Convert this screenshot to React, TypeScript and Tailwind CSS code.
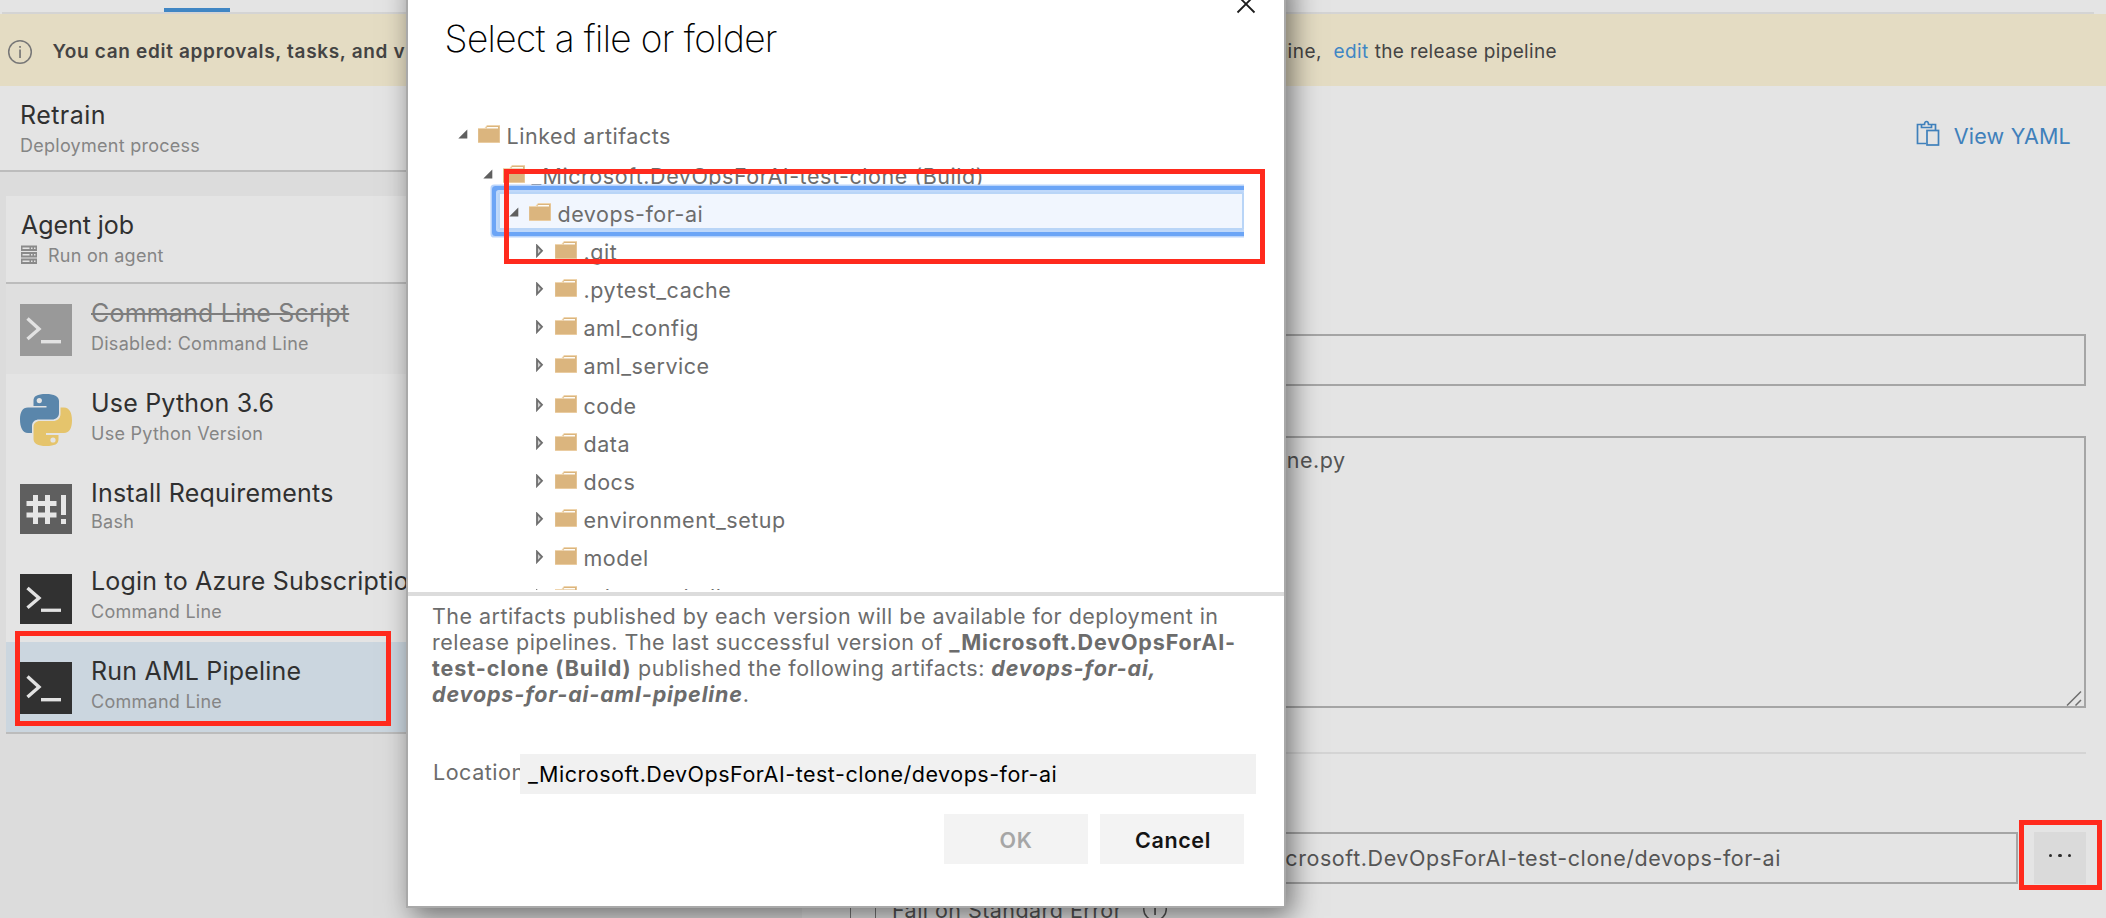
import React from "react";

type Expand = "open" | "closed";

function FolderIcon() {
  return (
    <svg viewBox="0 0 22 18" className="mt-[5px] h-[18px] w-[22px] shrink-0">
      <path d="M0 3H6.5L9 0H22V18H0Z" fill="#efd5ae" />
      <path d="M0.3 4H8L9 1H21.5V17.2H0.3Z" fill="#dbb57e" />
      <path d="M9.3 1.9H20V3.6H8.2Z" fill="#fffdf8" />
    </svg>
  );
}

function Arrow({ state }: { state: Expand }) {
  return state === "open" ? (
    <svg viewBox="0 0 10 10" className="mt-[9px] h-[10px] w-[10px] shrink-0">
      <path d="M9.3 0.6V9.6H0.3Z" fill="#5f5f5f" />
    </svg>
  ) : (
    <svg viewBox="0 0 8 14" className="mt-[8px] ml-[0.5px] h-[14px] w-[8px] shrink-0">
      <path d="M1 1.6V12L6 6.8Z" fill="#d0d0d0" stroke="#6e6e6e" strokeWidth="1.8" />
    </svg>
  );
}

function CmdIcon({ className }: { className: string }) {
  return (
    <svg viewBox="0 0 52 52" preserveAspectRatio="none" className={"w-[52px] " + className}>
      <rect width="52" height="52" fill="currentColor" />
      <path d="M7.5 14.5L19 25L7.5 35" fill="none" stroke="#e2e2e2" strokeWidth="3.4" />
      <rect x="21" y="36" width="20" height="3.4" fill="#e2e2e2" />
    </svg>
  );
}

function BashIcon() {
  return (
    <svg viewBox="0 0 52 50" className="mt-[20px] h-[50px] w-[52px]">
      <rect width="52" height="50" fill="#5f5f5f" />
      <g fill="#e6e6e6">
        <rect x="13" y="11" width="5" height="29" />
        <rect x="25" y="11" width="5" height="29" />
        <rect x="6.5" y="17" width="30" height="5" />
        <rect x="6.5" y="28.5" width="30" height="5" />
        <rect x="41" y="11" width="5" height="20" />
        <rect x="41" y="35" width="5" height="5" />
      </g>
    </svg>
  );
}

function PythonIcon() {
  return (
    <svg viewBox="0 0 52 52" className="mt-[20px] h-[52px] w-[52px]">
      <path d="M26 0C17 0 13.5 2 13.5 7V12H26.500V13.500H8C2.500 13.500 0 18 0 25.500S2.500 39 8 39H12V32C12 27.500 15.500 25.500 19 25.500H32C36 25.500 39 23 39 19V7C39 2.500 34 0 26 0Z" fill="#5a86ab" />
      <path d="M26 52C35 52 38.500 50 38.500 45V41H26V39H44C49.500 39 52 34 52 26.500S49.500 13.500 44 13.500H40.500V20C40.500 24.500 37 27 33 27H20C16 27 13.500 29.500 13.500 33V45C13.500 49.500 18 52 26 52Z" fill="#e5c46c" />
      <circle cx="19.300" cy="6.600" r="2.600" fill="#e4e4e4" />
      <circle cx="33" cy="46" r="2.600" fill="#e4e4e4" />
    </svg>
  );
}

function ServerIcon() {
  return (
    <svg viewBox="0 0 16 20" className="mt-[2px] h-[20px] w-[16px]">
      {[0.500, 7, 13.500].map((y) => (
        <g key={y}>
          <rect x="0" y={y} width="16" height="5.500" fill="#8a8a8a" />
          <rect x="1.500" y={y + 2} width="7" height="1.500" fill="#e4e4e4" />
          <rect x="10" y={y + 2} width="1.500" height="1.500" fill="#e4e4e4" />
          <rect x="13" y={y + 2} width="1.500" height="1.500" fill="#e4e4e4" />
        </g>
      ))}
    </svg>
  );
}

function InfoIcon({ className }: { className: string }) {
  return (
    <svg viewBox="0 0 26 26" className={"h-[26px] w-[26px] shrink-0 " + className}>
      <circle cx="13" cy="13" r="11.300" fill="none" stroke="currentColor" strokeWidth="1.500" />
      <rect x="12.200" y="10.500" width="1.700" height="8.500" fill="currentColor" />
      <rect x="12.200" y="7" width="1.700" height="1.800" fill="currentColor" />
    </svg>
  );
}

const subText = "mt-[3px] text-[18px] leading-[26px] tracking-[0.26px] text-[#858585]";
const titleText = "text-[25px] leading-[30px] tracking-[0.2px]";

function Task({ icon, title, sub, row = "h-[90px]", titleClass = "text-[#303030]", subClass = "" }: {
  icon: React.ReactNode; title: string; sub: string; row?: string; titleClass?: string; subClass?: string;
}) {
  return (
    <div className={"flex pl-[14px] " + row}>
      {icon}
      <div className="ml-[19px] pt-[14px] whitespace-nowrap">
        <div className={titleText + " " + titleClass}>{title}</div>
        <div className={subText + " " + subClass}>{sub}</div>
      </div>
    </div>
  );
}

function Row({ indent, state, label, className = "h-[38px]" }: { indent: string; state: Expand; label: string; className?: string }) {
  return (
    <div className={"flex shrink-0 items-start pt-[6px] " + indent + " " + className}>
      <div className="flex w-[19.500px] shrink-0">
        <Arrow state={state} />
      </div>
      <FolderIcon />
      <span className="ml-[7px] leading-[32px] tracking-[0.53px] whitespace-nowrap">{label}</span>
    </div>
  );
}

const children = [".git", ".pytest_cache", "aml_config", "aml_service", "code", "data", "docs", "environment_setup", "model", "release_shell"];

const rowHeights: Record<string, string> = { aml_service: "h-[40px]", model: "h-[39px]" };

function Dialog() {
  return (
    <div className="absolute top-[-30px] left-[406px] flex h-[938px] w-[880px] flex-col border-2 border-[#a9a9a9] bg-white pt-[28px] text-[21.5px] text-[#6c6c6c] shadow-[6px_8px_26px_rgba(0,0,0,0.5)]">
      <div className="flex h-[114px] shrink-0 justify-between pl-[36.500px]">
        <h1 className="pt-[19px] text-[37px] leading-[40px] font-[250] tracking-[-0.62px] text-black">Select a file or folder</h1>
        <svg viewBox="0 0 20 20" className="mt-[-6px] mr-[28px] h-[20px] w-[20px]">
          <path d="M1.500 1.500L18.500 18.500M18.500 1.500L1.500 18.500" stroke="#1c1c1c" strokeWidth="1.800" />
        </svg>
      </div>
      <div className="mr-[40px] flex h-[476px] shrink-0 flex-col overflow-hidden">
        <Row indent="pl-[50px]" state="open" label="Linked artifacts" className="h-[40px] tracking-[0.6px]" />
        <Row indent="pl-[75px]" state="open" label="_Microsoft.DevOpsForAI-test-clone (Build)" />
        <div className="relative ml-[90px] shrink-0 rounded-[1px] bg-[#f1f6fe] shadow-[inset_0_0_0_2px_#b9d5f7,0_0_0_2px_#bfd8fa,0_0_0_6px_#6ca5f6,0_0_0_7.500px_#b9d4fb]">
          <Row indent="pl-[11px]" state="open" label="devops-for-ai" />
        </div>
        {children.map((c) => (
          <Row key={c} indent="pl-[127px]" state="closed" label={c} className={rowHeights[c] ?? "h-[38px]"} />
        ))}
      </div>
      <div className="mt-[2px] h-[4px] shrink-0 bg-[#dcdcdc]" />
      <p className="mt-[7px] pl-[24px] leading-[26px] tracking-[0.475px] whitespace-nowrap">
        The artifacts published by each version will be available for deployment in<br />
        release pipelines. The last successful version of <b className="font-bold tracking-[0.85px]">_Microsoft.DevOpsForAI-</b><br />
        <b className="font-bold tracking-[0.93px]">test-clone (Build)</b> published the following artifacts: <b className="font-bold tracking-[0.85px] italic">devops-for-ai,</b><br />
        <b className="font-bold tracking-[0.85px] italic">devops-for-ai-aml-pipeline</b>.
      </p>
      <div className="mt-[47px] flex h-[40px] pl-[25px] leading-[37px]">
        <label className="w-[87px] overflow-hidden tracking-[0.53px]">Location</label>
        <div className="w-[736px] bg-[#f1f1f1] pl-[8px] leading-[40px] tracking-[0.51px] text-black">_Microsoft.DevOpsForAI-test-clone/devops-for-ai</div>
      </div>
      <div className="mt-[20px] mr-[40px] flex justify-end gap-[12px] font-semibold tracking-[0.6px]">
        <button className="h-[50px] w-[144px] bg-[#f3f3f3] pt-[2px] text-[#a6a6a6]">OK</button>
        <button className="h-[50px] w-[144px] bg-[#f3f3f3] pt-[2px] pl-[2px] text-[#141414]">Cancel</button>
      </div>
    </div>
  );
}

export default function App() {
  return (
    <div className="relative flex h-[918px] w-[2106px] flex-col overflow-hidden bg-[#e4e4e4] font-['Inter',sans-serif]">
      <div className="flex h-[12px] shrink-0 items-end pl-[164px]">
        <div className="h-[4px] w-[66px] bg-[#4086c4]" />
      </div>
      <div className="mr-[12px] ml-[2px] h-[2px] shrink-0 bg-[#d4d4d4]" />

      <div className="flex h-[72px] shrink-0 bg-[#e4dcc3] pl-[6.500px] text-[19px] leading-[75px] text-[#444444]">
        <InfoIcon className="mt-[25px] text-[#777777]" />
        <span className="ml-[20px] w-[370px] font-semibold tracking-[0.67px] whitespace-nowrap">You can edit approvals, tasks, and v</span>
        <span className="w-[899.500px] text-right tracking-[0.5px]">pipeline,</span>
        <span className="ml-[11.500px] tracking-[0.4px] text-[#4086c4]">edit</span>
        <span className="ml-[6px] tracking-[0.36px]">the release pipeline</span>
      </div>

      <div className="flex h-[832px] shrink-0">
        <aside className="flex w-[802px] flex-col bg-[#dcdcdc]">
          <div className="h-[86px] shrink-0 border-b-2 border-[#bcbcbc] bg-[#e4e4e4] pt-[14px] pl-[20px]">
            <div className="text-[25px] leading-[30px] tracking-[0.45px] text-[#303030]">Retrain</div>
            <div className={subText}>Deployment process</div>
          </div>
          <div className="mt-[24px] ml-[6px] border-b-2 border-[#bcbcbc] bg-[#e4e4e4]">
            <div className="h-[88px] border-b-2 border-[#bcbcbc] pt-[14px] pl-[15px]">
              <div className="text-[25px] leading-[30px] tracking-[-0.05px] text-[#303030]">Agent job</div>
              <div className={"flex gap-[11px] " + subText}>
                <ServerIcon />
                Run on agent
              </div>
            </div>
            <Task
              row="h-[90px] bg-[#dfdfdf]"
              icon={<CmdIcon className="mt-[20px] h-[52px] text-[#999999]" />}
              title="Command Line Script"
              sub="Disabled: Command Line"
              titleClass="line-through decoration-2 text-[#7d7d7d]"
            />
            <Task icon={<PythonIcon />} title="Use Python 3.6" sub="Use Python Version" />
            <Task row="h-[88px]" icon={<BashIcon />} title="Install Requirements" sub="Bash" subClass="-translate-y-[2px]" />
            <Task icon={<CmdIcon className="mt-[22px] h-[50px] text-[#313131]" />} title="Login to Azure Subscription" sub="Command Line" />
            <Task row="h-[90px] bg-[#cbd6df]" icon={<CmdIcon className="mt-[20px] h-[52px] text-[#313131]" />} title="Run AML Pipeline" sub="Command Line" />
          </div>
        </aside>

        <main className="flex w-[1304px] flex-col pr-[20px] pl-[28px] text-[21.5px] text-[#555555]">
          <div className="flex h-[248px] shrink-0 justify-end pr-[15px] text-[#3f80bb]">
            <svg viewBox="0 0 24 26" className="mt-[34px] h-[26px] w-[24px]" fill="none" stroke="currentColor" strokeWidth="1.700">
              <path d="M10 23.500H1.500V4.500H5M16 4.500H19.500V10" />
              <path d="M5.500 7.500V4.500H8.500C8.500 0.500 12.500 0.500 12.500 4.500H15.500V7.500Z" />
              <rect x="11" y="10.500" width="11.500" height="14.500" />
            </svg>
            <span className="ml-[14px] pt-[34px] leading-[32px] tracking-[0.22px]">View YAML</span>
          </div>
          <div className="h-[52px] shrink-0 border-2 border-[#a5a5a5]" />
          <div className="relative mt-[50px] h-[272px] shrink-0 border-2 border-[#a5a5a5] pt-[6px] pr-[738.500px] text-right leading-[32px] tracking-[0.5px]">
            pipeline.py
            <svg viewBox="0 0 16 16" className="absolute right-[2px] bottom-0 h-[16px] w-[16px]" stroke="#6e6e6e" strokeWidth="1.500">
              <path d="M1 15.500L15 1.500M9.500 15.500L15 10" />
            </svg>
          </div>
          <div className="mt-[44px] h-[2px] shrink-0 bg-[#d4d4d4]" />
          <div className="mt-[78px] flex h-[52px] shrink-0 gap-[16px]">
            <div className="flex-1 border-2 border-[#a5a5a5] pr-[235px] text-right leading-[48px] tracking-[0.58px]">/_Microsoft.DevOpsForAI-test-clone/devops-for-ai</div>
            <div className="flex w-[52px] items-start justify-center gap-[6.200px] bg-[#dadada] pt-[21.500px]">
              <i className="h-[3.500px] w-[3.500px] rounded-full bg-[#2c2c2c]" />
              <i className="h-[3.500px] w-[3.500px] rounded-full bg-[#2c2c2c]" />
              <i className="h-[3.500px] w-[3.500px] rounded-full bg-[#2c2c2c]" />
            </div>
          </div>
          <div className="mt-[10px] flex h-[32px] shrink-0 pl-[20px]">
            <div className="mt-[3px] h-[26px] w-[26px] rounded-[3px] border-[1.500px] border-[#777777]" />
            <span className="ml-[16px] leading-[32px] tracking-[0.45px]">Fail on Standard Error</span>
            <InfoIcon className="mt-[2px] ml-[20px]" />
          </div>
        </main>
      </div>

      <Dialog />

      <div className="absolute top-[631px] left-[15px] h-[95px] w-[376px] border-5 border-[#ff2a1d]" />
      <div className="absolute top-[169px] left-[504px] h-[95px] w-[761px] border-5 border-[#ff2a1d]" />
      <div className="absolute top-[820px] left-[2019px] h-[70px] w-[83px] border-5 border-[#ff2a1d]" />
    </div>
  );
}
